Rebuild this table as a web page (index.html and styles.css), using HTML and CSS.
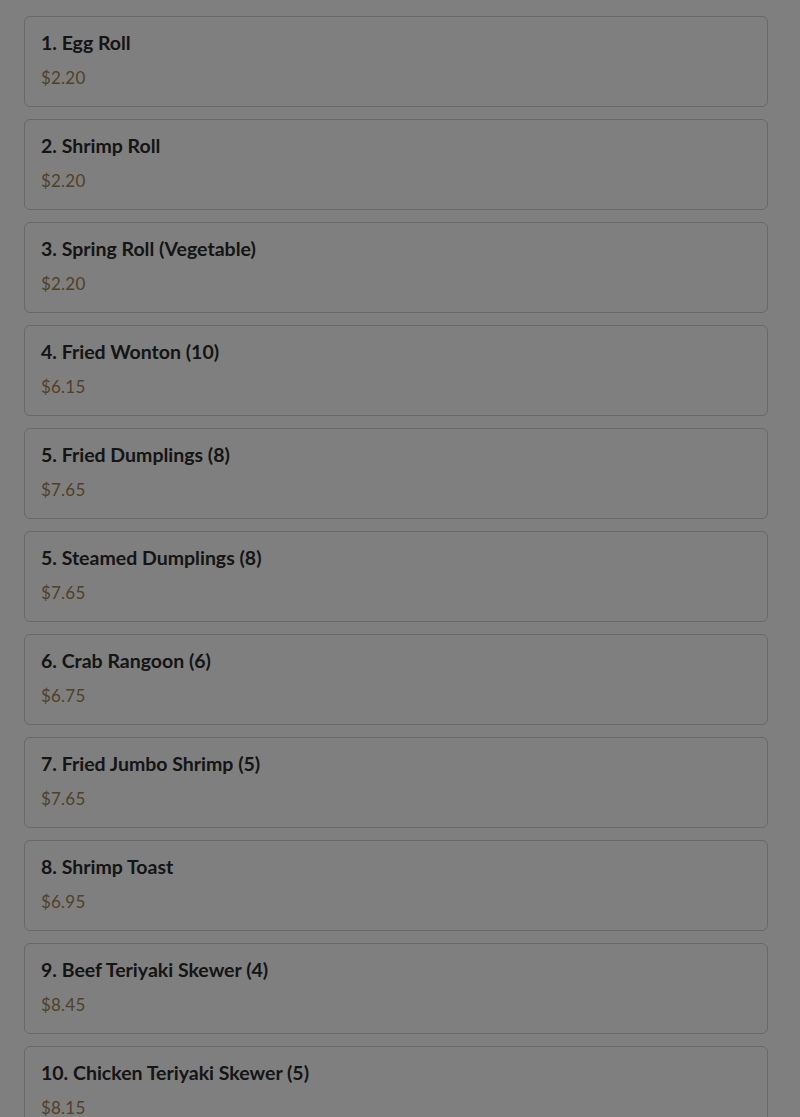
FILE: index.html
```html
<!DOCTYPE html>
<html lang="en">
<head>
<meta charset="utf-8">
<title>Appetizers</title>
<link rel="stylesheet" href="styles.css">
</head>
<body>
<main class="menu">
  <div class="item"><h3 class="item-name">1. Egg Roll</h3><div class="item-price">$2.20</div></div>
  <div class="item"><h3 class="item-name">2. Shrimp Roll</h3><div class="item-price">$2.20</div></div>
  <div class="item"><h3 class="item-name">3. Spring Roll (Vegetable)</h3><div class="item-price">$2.20</div></div>
  <div class="item"><h3 class="item-name">4. Fried Wonton (10)</h3><div class="item-price">$6.15</div></div>
  <div class="item"><h3 class="item-name">5. Fried Dumplings (8)</h3><div class="item-price">$7.65</div></div>
  <div class="item"><h3 class="item-name">5. Steamed Dumplings (8)</h3><div class="item-price">$7.65</div></div>
  <div class="item"><h3 class="item-name">6. Crab Rangoon (6)</h3><div class="item-price">$6.75</div></div>
  <div class="item"><h3 class="item-name">7. Fried Jumbo Shrimp (5)</h3><div class="item-price">$7.65</div></div>
  <div class="item"><h3 class="item-name">8. Shrimp Toast</h3><div class="item-price">$6.95</div></div>
  <div class="item"><h3 class="item-name">9. Beef Teriyaki Skewer (4)</h3><div class="item-price">$8.45</div></div>
  <div class="item"><h3 class="item-name">10. Chicken Teriyaki Skewer (5)</h3><div class="item-price">$8.15</div></div>
  <div class="item"><h3 class="item-name">11. Boneless Spare Ribs</h3><div class="item-price">$9.95</div></div>
</main>
<div class="backdrop"></div>
</body>
</html>
```
FILE: styles.css
```css
html, body {
  margin: 0;
  padding: 0;
  background: #ffffff;
  font-family: Lato, "Noto Sans", "Liberation Sans", sans-serif;
}

.menu {
  display: flex;
  flex-direction: column;
  gap: 12px;
  padding: 16px 32px 16px 24px;
}

.item {
  border: 1px solid #d0d0d0;
  border-radius: 6px;
  padding: 16px;
  height: 57px;
  display: flex;
  flex-direction: column;
  gap: 13px;
}

.item-name {
  margin: 0;
  font-size: 19.5px;
  line-height: 20px;
  font-weight: 700;
  color: #2a2a2a;
}

.item-price {
  font-size: 17px;
  line-height: 24px;
  color: #a2824f;
  letter-spacing: 0.2px;
}

.backdrop {
  position: fixed;
  inset: 0;
  background: rgba(0, 0, 0, 0.5);
}
```
